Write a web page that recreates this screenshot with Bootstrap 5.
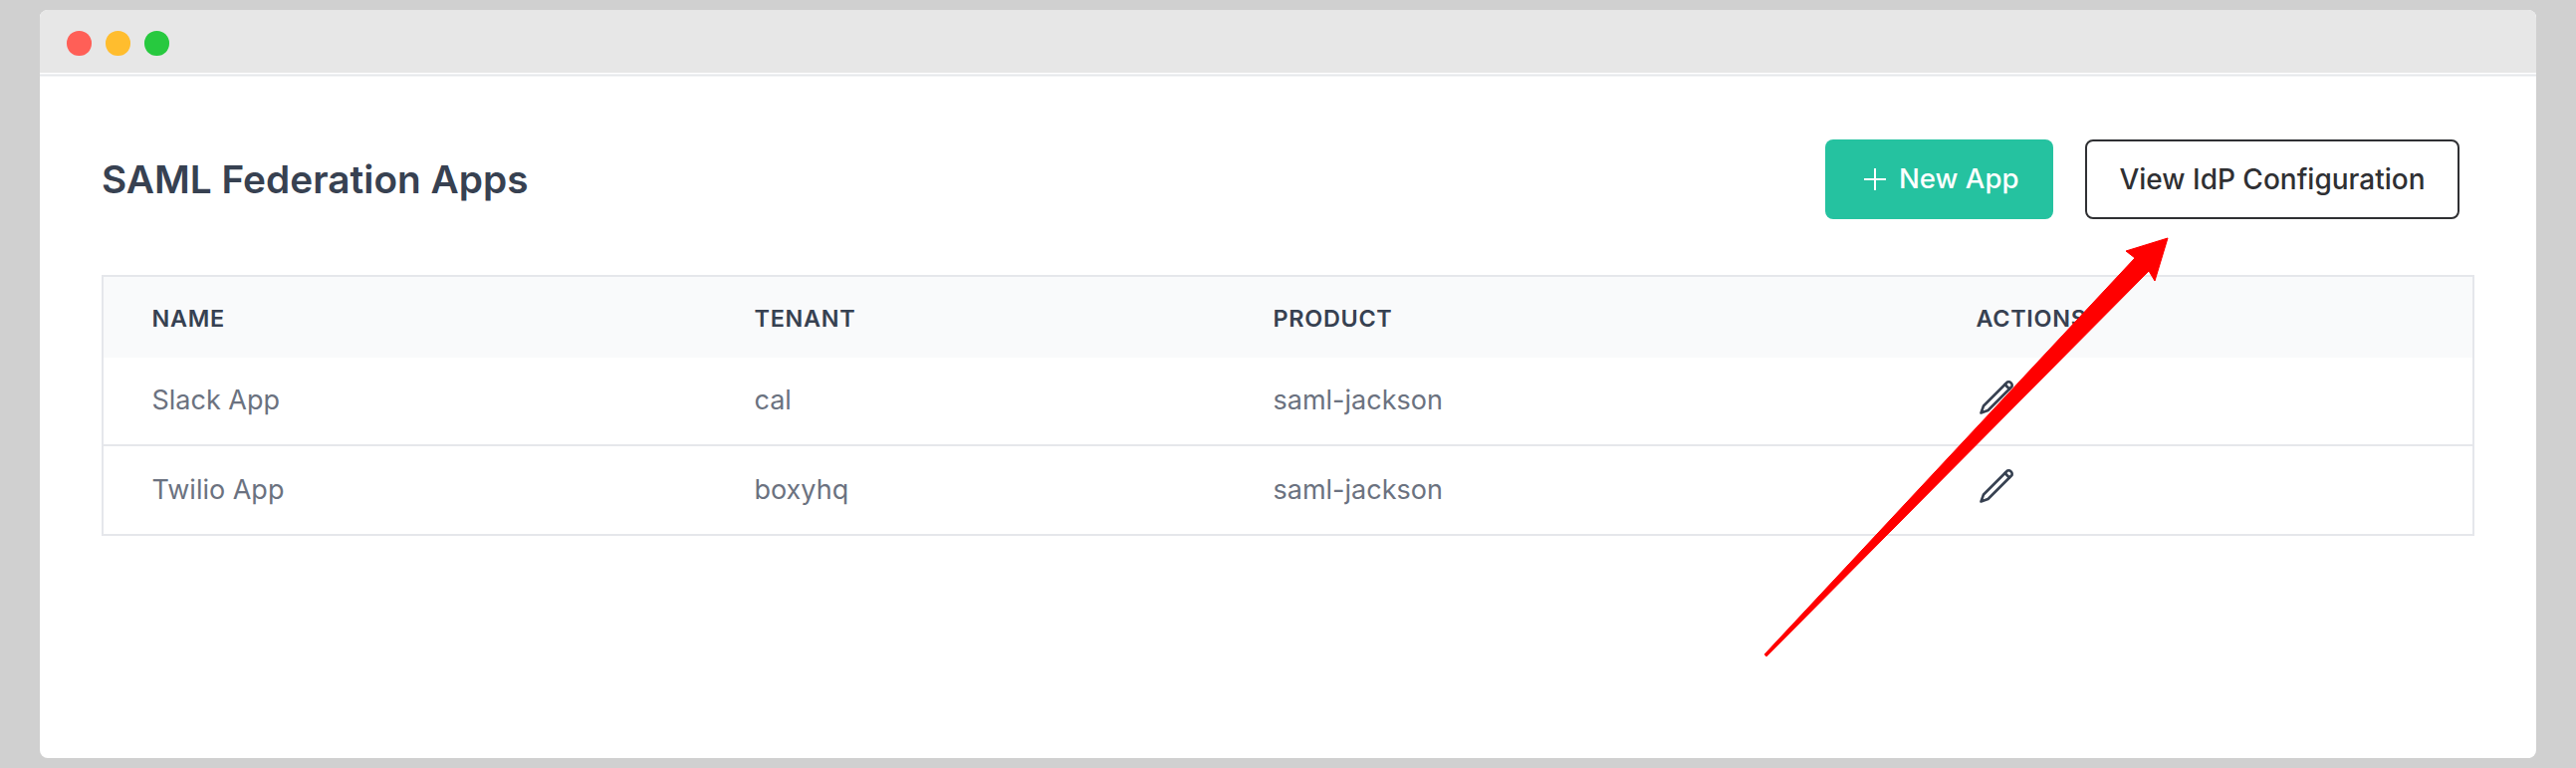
<!DOCTYPE html>
<html lang="en">
<head>
<meta charset="utf-8">
<title>SAML Federation Apps</title>
<link href="https://cdn.jsdelivr.net/npm/bootstrap@5.3.0/dist/css/bootstrap.min.css" rel="stylesheet">
<style>
html, body { height: 100%; }
body { background: #d0d0d0; font-family: Inter, "Liberation Sans", sans-serif; padding: 10px 40px; overflow: hidden; }
.app-window { height: 751px; background: #fff; border-radius: 8px; overflow: hidden; position: relative; }
.title-strip { height: 63px; padding: 4px 27px 0; background: #e7e7e7; gap: 14.5px; box-shadow: 0 1.5px 0 #fff, 0 3.5px 0 #e5e7eb; }
.traffic { width: 24.5px; height: 24.5px; border-radius: 50%; }
.traffic-r { background: #ff5f57; } .traffic-y { background: #ffbd2e; } .traffic-g { background: #27c93f; }
.main-pane { padding: 67px 62px 0; }
.head-row { height: 80px; margin-bottom: 56px; padding-right: 15px; }
.page-title { font-size: 38.8px; font-weight: 600; color: #374151; margin: 0; }
.act-btn { font-weight: 500; border-radius: 8px; height: 80px; display: inline-flex; align-items: center; }
.act-teal { background: #25c2a0; border: 0; color: #fff; width: 229px; padding: 0 0 0 39px; gap: 13px; font-size: 27.6px; }
.act-teal:hover { background: #25c2a0; color: #fff; }
.act-outline { background: #fff; border: 2px solid #2f3033; color: #2f3033; width: 376px; justify-content: center; padding: 0; margin-left: 32px; font-size: 28px; }
.apps-table { border: 2px solid #e5e7eb; margin: 0; table-layout: fixed; width: 100%; }
.apps-table th { background: #f9fafb; color: #374151; font-size: 23.4px; font-weight: 600; letter-spacing: .7px; height: 82px; padding: 2px 0 0 48.5px; vertical-align: middle; border: 0; text-transform: uppercase; }
.apps-table td { color: #6b7280; font-size: 27px; font-weight: 400; height: 90px; padding: 0 0 0 48.5px; vertical-align: middle; border: 0; border-top: 2px solid #e5e7eb; }
.apps-table tbody tr:first-child td { border-top: 0; height: 88px; }
.c-name { width: 606px; } .c-tenant { width: 521px; } .c-product { width: 706px; }
.pencil-ico { width: 36px; height: 36px; display: block; margin: -10px 0 0 3px; }
.annot { position: absolute; left: 0; top: 0; width: 2587px; height: 771px; pointer-events: none; }
</style>
</head>
<body>
<div class="app-window">
  <div class="title-strip d-flex align-items-center">
    <span class="traffic traffic-r"></span><span class="traffic traffic-y"></span><span class="traffic traffic-g"></span>
  </div>
  <div class="main-pane">
    <div class="head-row d-flex align-items-center justify-content-between">
      <h1 class="page-title">SAML Federation Apps</h1>
      <div class="d-flex">
        <a href="#" class="btn act-btn act-teal">
          <svg width="22" height="22" viewBox="0 0 22 22" fill="none" stroke="#fff" stroke-width="2"><path d="M11 0v22M0 11h22"/></svg>
          New App</a>
        <a href="#" class="btn act-btn act-outline">View IdP Configuration</a>
      </div>
    </div>
    <table class="table apps-table">
      <colgroup><col class="c-name"><col class="c-tenant"><col class="c-product"><col></colgroup>
      <thead><tr><th>Name</th><th>Tenant</th><th>Product</th><th>Actions</th></tr></thead>
      <tbody>
        <tr><td>Slack App</td><td>cal</td><td>saml-jackson</td><td>
          <svg class="pencil-ico" viewBox="0 0 36 36" fill="none" stroke="#374151" stroke-width="2.6" stroke-linejoin="round" stroke-linecap="round"><path d="M1.5 34.5 4 27.5 28 3.5a3.6 3.6 0 0 1 4.5 4.5L8.5 32Z"/><path d="M25.5 6l4.5 4.5"/></svg></td></tr>
        <tr><td>Twilio App</td><td>boxyhq</td><td>saml-jackson</td><td>
          <svg class="pencil-ico" viewBox="0 0 36 36" fill="none" stroke="#374151" stroke-width="2.6" stroke-linejoin="round" stroke-linecap="round"><path d="M1.5 34.5 4 27.5 28 3.5a3.6 3.6 0 0 1 4.5 4.5L8.5 32Z"/><path d="M25.5 6l4.5 4.5"/></svg></td></tr>
      </tbody>
    </table>
  </div>
</div>
<svg class="annot" viewBox="0 0 2587 771"><polygon points="1772,657 2144,259 2135,252 2177,239 2164,282 2158,272 1774,659" fill="#ff0000" stroke="#ff0000" stroke-width="1" stroke-linejoin="round"/></svg>
<script src="https://cdn.jsdelivr.net/npm/bootstrap@5.3.0/dist/js/bootstrap.bundle.min.js"></script>
</body>
</html>
